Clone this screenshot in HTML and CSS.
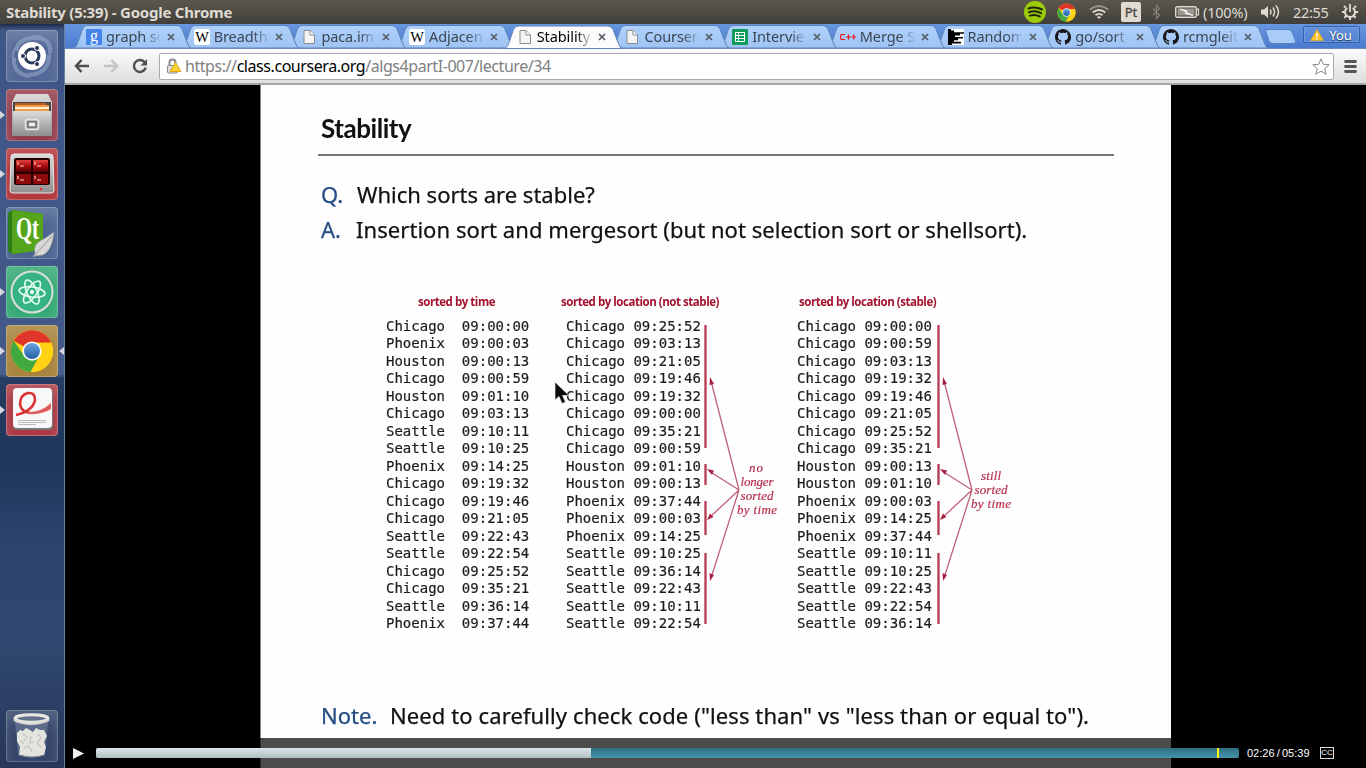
FILE: index.html
```html
<!DOCTYPE html>
<html lang="en">
<head>
<meta charset="utf-8">
<title>Stability (5:39)</title>
<link rel="stylesheet" href="styles.css">
</head>
<body>
<svg class="defs" width="0" height="0">
  <defs>
    <linearGradient id="tabfill" x1="0" y1="0" x2="0" y2="1"><stop offset="0" stop-color="#aed0fa"/><stop offset="1" stop-color="#9fc4f4"/></linearGradient>
    <linearGradient id="metal" x1="0" y1="0" x2="0" y2="1"><stop offset="0" stop-color="#dcdcdc"/><stop offset="1" stop-color="#8f8f8f"/></linearGradient>
    <linearGradient id="redscreen" x1="0" y1="0" x2="0" y2="1"><stop offset="0" stop-color="#e04040"/><stop offset=".5" stop-color="#a80b0b"/><stop offset="1" stop-color="#500"/></linearGradient>
    <linearGradient id="blueball" x1="0" y1="0" x2="0" y2="1"><stop offset="0" stop-color="#6ba2dd"/><stop offset="1" stop-color="#2161a8"/></linearGradient>
    <symbol id="tab" viewBox="0 0 124 24"><path d="M0 24 C4 24 5 21 6 18L10.500 5Q12 1.500 15 1.500H105Q108.500 1.500 110 5L115 18Q117 24 119 24Z"/></symbol>
    <symbol id="page" viewBox="0 0 16 16"><path d="M3 1.500H9L13.500 6V14.500H3Z" fill="#f4f4f4" stroke="#8c8c8c"/><path d="M9 1.500V6H13.500" fill="#fff" stroke="#8c8c8c"/></symbol>
    <symbol id="wiki" viewBox="0 0 16 16"><rect width="16" height="16" rx="2.500" fill="#fff"/><text x="8" y="13" text-anchor="middle" font-family="Liberation Serif, serif" font-size="14.500" fill="#000">W</text></symbol>
    <symbol id="github" viewBox="0 0 16 16"><path fill="#191717" d="M8 0C3.580 0 0 3.580 0 8c0 3.540 2.290 6.530 5.470 7.590.4.070.55-.17.55-.38 0-.19-.01-.82-.01-1.490-2.010.37-2.530-.49-2.690-.94-.09-.23-.48-.94-.82-1.130-.28-.15-.68-.52-.01-.53.63-.01 1.080.58 1.230.82.72 1.210 1.870.87 2.330.66.07-.52.28-.87.51-1.070-1.780-.2-3.640-.89-3.640-3.950 0-.87.31-1.590.82-2.150-.08-.2-.36-1.020.08-2.120 0 0 .67-.21 2.200.82A7.600 7.600 0 0 1 8 3.860c.68 0 1.360.09 2 .27 1.530-1.040 2.200-.82 2.200-.82.44 1.100.16 1.920.08 2.120.51.56.82 1.270.82 2.150 0 3.070-1.870 3.750-3.650 3.950.29.25.54.73.54 1.480 0 1.070-.01 1.930-.01 2.200 0 .21.15.46.55.38A8 8 0 0 0 8 0Z"/></symbol>
    <symbol id="close" viewBox="0 0 8 8"><path d="M1 1L7 7M7 1L1 7" stroke="#555c66" stroke-width="1.700"/></symbol>
    <symbol id="chrome" viewBox="0 0 48 48">
      <circle cx="24" cy="24" r="23" fill="#ffd214"/>
      <path d="M24 24L4 12.700A23 23 0 0 1 45 15H24Z" fill="#e0352b"/>
      <path d="M4 12.700A23 23 0 0 0 22.500 47L33 29L24 24L14 27Z" fill="#41a940"/>
      <path d="M24 15H45A23 23 0 0 1 22.500 47L32 29Z" fill="#ffd214"/>
      <circle cx="24" cy="24" r="10.500" fill="#fff"/><circle cx="24" cy="24" r="8.700" fill="url(#blueball)"/>
    </symbol>
  </defs>
</svg>

<header class="panel">
  <h1 class="panel-title">Stability (5:39) - Google Chrome</h1>
  <div class="tray">
    <svg class="t-spotify" width="22" height="22" viewBox="0 0 22 22"><circle cx="11" cy="11" r="11" fill="#9ccb0a"/><path d="M4.500 7.500Q11 5 18 8.500M5 11.200Q11 9 17 12.200M5.800 14.600Q11 13 15.800 15.500" fill="none" stroke="#20260c" stroke-width="2" stroke-linecap="round"/></svg>
    <svg class="t-chrome" width="19" height="19"><use href="#chrome"/></svg>
    <svg class="t-wifi" width="20" height="14" viewBox="0 0 20 14" fill="none" stroke-width="1.800"><path d="M.8 4.500Q10-2.500 19.200 4.500" stroke="#98958d"/><path d="M3.700 7.500Q10 2.500 16.300 7.500M6.500 10.200Q10 7.500 13.500 10.200" stroke="#dfdbd2"/><path d="M8 12L10 14L12 12Q10 10.500 8 12" fill="#dfdbd2" stroke="none"/></svg>
    <span class="t-lang">Pt</span>
    <svg class="t-bt" width="9" height="16" viewBox="0 0 9 16"><path d="M1 4.500L7.500 11L4.500 14.500V1.500L7.500 4.500L1 11" fill="none" stroke="#85827b" stroke-width="1.200"/></svg>
    <svg class="t-bat" width="25" height="12" viewBox="0 0 25 12"><rect x=".7" y=".7" width="20.600" height="10.600" rx="1.500" fill="none" stroke="#dfdbd2" stroke-width="1.400"/><rect x="2.500" y="2.500" width="17" height="7" fill="#9b9890"/><path d="M22 3H23.500V9H22" fill="none" stroke="#dfdbd2" stroke-width="1.200"/><path d="M5 3L12 5L11 6.500L18 9.500L10.500 7.500L11.500 6Z" fill="#fff" stroke="#fff" stroke-width=".8"/></svg>
    <span class="t-pct">(100%)</span>
    <svg class="t-vol" width="20" height="16" viewBox="0 0 20 16"><path d="M0 5.500H3L7 2V14L3 10.500H0Z" fill="#dfdbd2"/><path d="M9 5.500Q11 8 9 10.500M12 3.500Q15 8 12 12.500M15 1.500Q20 8 15 14.500" fill="none" stroke="#dfdbd2" stroke-width="1.500"/></svg>
    <span class="t-time">22:55</span>
    <svg class="t-gear" width="16" height="16" viewBox="0 0 16 16" fill="none" stroke="#dfdbd2"><path d="M5.300 3.800A5 5 0 1 0 10.700 3.800" stroke-width="2"/><path d="M8 0V8" stroke-width="1.800"/><path d="M3.500 3.500L2 2M12.500 3.500L14 2M3 8H0M13 8H16M4.300 11.700L2.300 13.700M11.700 11.700L13.700 13.700M8 13V16" stroke-width="2"/></svg>
  </div>
</header>

<div class="desktop">
  <nav class="launcher">
    <div class="tile dash"><svg width="52" height="52" viewBox="0 0 52 52"><g fill="none" stroke="#a9b9da" opacity=".45"><path d="M9 38Q1 17 22 8T44 29" stroke-width="2"/><path d="M10 21Q12 8 29 8T44 23M8 28Q7 45 24 46M43 25Q43 44 22 45" stroke-width="4"/></g><circle cx="26" cy="26" r="14" fill="#fff"/><circle cx="26" cy="26" r="7" fill="none" stroke="#2b3758" stroke-width="3"/><g fill="#2b3758" stroke="#fff"><circle cx="17" cy="26" r="2.500"/><circle cx="31" cy="18" r="2.500"/><circle cx="31" cy="34" r="2.500"/></g></svg></div>
    <div class="tile files run"><svg width="52" height="52" viewBox="0 0 52 52"><path d="M10 5H42L46 13V47H6V13Z" fill="url(#metal)"/><path d="M7 13H45V23H7Z" fill="#4b4843"/><path d="M9 14H40L42 22H9Z" fill="#b45d20"/><path d="M9 16H43V22H9Z" fill="#f09a45"/><path d="M9 18H43V20H9Z" fill="#fff1d6"/><path d="M7 22H45V46H7Z" fill="url(#metal)"/><rect x="19.500" y="30.500" width="13" height="10" rx="2" fill="#aaa" stroke="#e5e5e5" stroke-width="1.500"/><rect x="22" y="33" width="8" height="5" fill="#eee" stroke="#444"/></svg></div>
    <div class="tile term run"><svg width="52" height="52" viewBox="0 0 52 52"><path d="M8 6H44Q47 6 47 9L48 42Q48 45 45 45H7Q4 45 4 42L5 9Q5 6 8 6Z" fill="url(#metal)" stroke="#e8e8e8"/><rect x="8" y="10" width="36" height="27" rx="2" fill="#250000"/><path d="M10 12H25V24H10ZM27 12H42V24H27Z" fill="url(#redscreen)"/><path d="M10 26H25V36H10ZM27 26H42V36H27Z" fill="#8d0b0b"/><path d="M11 14L13 15.500L11 17M14 18H18M28 14L30 15.500L28 17M31 18H35M11 28L13 29.500L11 31M14 32H18M28 28L30 29.500L28 31M31 32H35" stroke="#ffd0d0" fill="none"/><circle cx="35" cy="41" r="1.200" fill="#e22"/></svg></div>
    <div class="tile qt"><svg width="52" height="52" viewBox="0 0 52 52"><path d="M2 6L6 3L37 7V43L6 47L2 44Z" fill="#2d7d1b"/><path d="M6 3L37 7V43L6 47Z" fill="#55a51c"/><text x="10" y="32" class="qt-text" textLength="23" lengthAdjust="spacingAndGlyphs">Qt</text><path d="M48 25Q46 44 37 48L30 49L27 50L29 46Q27 38 34 34Q40 31 48 25Z" fill="#d8d8d8" stroke="#8d9399" stroke-width=".7"/><path d="M46 29L28 49" stroke="#999"/></svg></div>
    <div class="tile atom run"><svg width="52" height="52" viewBox="0 0 52 52" fill="none" stroke="#e5fff2"><circle cx="26" cy="26" r="20.500" fill="#36b483" stroke="#ddd" stroke-width="2"/><g stroke-width="1.600"><ellipse cx="26" cy="26" rx="5" ry="13" transform="rotate(-25 26 26)"/><ellipse cx="26" cy="26" rx="5" ry="13" transform="rotate(35 26 26)"/><ellipse cx="26" cy="26" rx="5" ry="13" transform="rotate(-82 26 26)"/></g><circle cx="26" cy="26" r="1.700" fill="#fff"/></svg></div>
    <div class="tile chrome run active"><svg width="44" height="44"><use href="#chrome"/></svg></div>
    <div class="tile pdf run"><svg width="52" height="52" viewBox="0 0 52 52"><rect x="7" y="5" width="40" height="41" rx="4" fill="#777"/><rect x="7" y="4" width="39" height="40" rx="4" fill="#f8f8f8"/><path d="M10 31Q27 27 29 16Q29 8 22 9Q14 11 14 20Q15 28 24 29" fill="none" stroke="#db3031" stroke-width="2.500"/><path d="M22 28Q36 28 45 19V25Q36 31 22 30Z" fill="#e25b5b"/><path d="M12 36.500H40M12 38.500H40M12 40.500H30" stroke="#bbb"/></svg></div>
    <div class="tile trash"><svg width="52" height="52" viewBox="0 0 52 52"><path d="M9 12L12 45Q26 50 39 45L42 12Z" fill="#c6d0df" opacity=".25"/><path d="M11 23L14 20L17 21L20 18L24 20L27 22L30 18L34 20L38 20L41 26L38 32L40 37L38 45Q26 49 13 45L14 37L11 31Z" fill="#e4e4df"/><path d="M17 24L21 27L18 31M25 26L24 33L28 32M32 24L35 28L31 33L35 37M18 38L23 36L26 42M15 31L18 34" fill="none" stroke="#c3c3be" stroke-width="1.200"/><path d="M14 45Q26 49 38 45" stroke="#888" fill="none"/><ellipse cx="25.500" cy="8.500" rx="16.500" ry="3.800" fill="#65718b" stroke="#e8e8e2" stroke-width="3"/><path d="M8 10Q25 18 43 10" fill="none" stroke="#d9d9d3" stroke-width="2"/></svg></div>
  </nav>

  <main class="browser">
    <div class="tabstrip">
      <div class="tabs">
        <div class="tab"><svg class="shape"><use href="#tab"/></svg><svg class="fav" viewBox="0 0 16 16"><rect width="16" height="16" rx="1" fill="#4683ea"/><text x="8" y="12" text-anchor="middle" fill="#fff" font-family="Liberation Serif, serif" font-size="16">g</text></svg><span class="label">graph so</span><svg class="x"><use href="#close"/></svg></div>
        <div class="tab"><svg class="shape"><use href="#tab"/></svg><svg class="fav"><use href="#wiki"/></svg><span class="label">Breadth</span><svg class="x"><use href="#close"/></svg></div>
        <div class="tab"><svg class="shape"><use href="#tab"/></svg><svg class="fav"><use href="#page"/></svg><span class="label">paca.im</span><svg class="x"><use href="#close"/></svg></div>
        <div class="tab"><svg class="shape"><use href="#tab"/></svg><svg class="fav"><use href="#wiki"/></svg><span class="label">Adjacen</span><svg class="x"><use href="#close"/></svg></div>
        <div class="tab current"><svg class="shape"><use href="#tab"/></svg><svg class="fav"><use href="#page"/></svg><span class="label">Stability</span><svg class="x"><use href="#close"/></svg></div>
        <div class="tab"><svg class="shape"><use href="#tab"/></svg><svg class="fav"><use href="#page"/></svg><span class="label">Courser</span><svg class="x"><use href="#close"/></svg></div>
        <div class="tab"><svg class="shape"><use href="#tab"/></svg><svg class="fav" viewBox="0 0 16 16"><rect width="16" height="16" rx="1" fill="#109d59"/><path d="M3.500 3.500H12.500V12.500H3.500ZM3.500 6.500H12.500M3.500 9.500H12.500M6.500 3.500V12.500" stroke="#fff" fill="none"/></svg><span class="label">Intervie</span><svg class="x"><use href="#close"/></svg></div>
        <div class="tab"><svg class="shape"><use href="#tab"/></svg><svg class="fav" viewBox="0 0 16 16"><path d="M5 5.500H1.500L.5 6.500V9.500L1.500 10.500H5M6 8H11M8.500 5.500V10.500M11.500 8H16M13.700 5.500V10.500" fill="none" stroke="#f01018" stroke-width="1.200"/></svg><span class="label">Merge S</span><svg class="x"><use href="#close"/></svg></div>
        <div class="tab"><svg class="shape"><use href="#tab"/></svg><svg class="fav" viewBox="0 0 16 16"><rect width="16" height="16" fill="#fff"/><path d="M0 .8H3M0 2.400H6M0 4H16M0 5.600H12M0 7.200H7M0 8.800H15M0 10.400H10M0 12H6M0 13.600H13M0 15.200H4" stroke="#000" stroke-width="1.600"/></svg><span class="label">Random</span><svg class="x"><use href="#close"/></svg></div>
        <div class="tab"><svg class="shape"><use href="#tab"/></svg><svg class="fav"><use href="#github"/></svg><span class="label">go/sort</span><svg class="x"><use href="#close"/></svg></div>
        <div class="tab"><svg class="shape"><use href="#tab"/></svg><svg class="fav"><use href="#github"/></svg><span class="label">rcmgleit</span><svg class="x"><use href="#close"/></svg></div>
      </div>
      <svg class="newtab" width="32" height="16" viewBox="0 0 32 16"><path d="M3 .5H23Q26 .5 27 3L30.500 12Q31 14.500 28 14.500H8Q5 14.500 4 12L1 3Q.5.5 3 .5Z" fill="#a9cbf7" stroke="#5583c2"/></svg>
      <div class="profile"><svg width="14" height="12" viewBox="0 0 14 12"><path d="M7 .5L13.500 11.500H.5Z" fill="#fcc32c" stroke="#e7a917" stroke-width=".6"/><path d="M7 4V8M7 9V10.500" stroke="#fff" stroke-width="1.400"/></svg><span>You</span></div>
    </div>
    <div class="toolbar">
      <svg class="back" width="16" height="14" viewBox="0 0 16 14"><path d="M7.500 1L2 7L7.500 13M2.500 7H15" fill="none" stroke="#4f4f4f" stroke-width="2.500"/></svg>
      <svg class="fwd" width="16" height="14" viewBox="0 0 16 14"><path d="M8.500 1L14 7L8.500 13M13.500 7H1" fill="none" stroke="#c4c4c4" stroke-width="2.500"/></svg>
      <svg class="reload" width="16" height="16" viewBox="0 0 16 16"><path d="M12.500 4A6 6 0 1 0 13.700 9.700" fill="none" stroke="#4f4f4f" stroke-width="2.400"/><path d="M15 1V7.500H8.500Z" fill="#4f4f4f"/></svg>
      <div class="omnibox">
        <svg width="16" height="17" viewBox="0 0 16 17"><path d="M3.500 8V4.500Q3.500 1.500 6.500 1.500T9.500 4.500V8" fill="none" stroke="#8d8d8d" stroke-width="2"/><rect x="1.500" y="7.500" width="10" height="7.500" rx="1" fill="#ddd" stroke="#888"/><path d="M9.500 4.500L15 13.500H4Z" fill="#ffd02b" stroke="#e0a818" stroke-linejoin="round"/></svg>
        <span class="url">https://<b>class.coursera.org</b>/algs4partI-007/lecture/34</span>
        <svg class="star" width="18" height="17" viewBox="0 0 18 17"><path d="M9 .8L11.300 6.300L17.200 6.800L12.700 10.600L14.200 16.200L9 13.200L3.800 16.200L5.300 10.600L.8 6.800L6.700 6.300Z" fill="#fff" stroke="#8a8a8a" stroke-linejoin="round"/></svg>
      </div>
      <svg class="menu" width="13" height="13" viewBox="0 0 13 13"><path d="M1.500 1.500H11.500M1.500 6.500H11.500M1.500 11.500H11.500" stroke="#555" stroke-width="2.800" stroke-linecap="round"/></svg>
    </div>

    <section class="video">
      <article class="slide">
        <h2 class="title"><span>Stability</span></h2>
        <p class="line"><em class="q">Q.</em><span class="question">Which sorts are stable?</span></p>
        <p class="line"><em class="a">A.</em><span class="answer">Insertion sort and mergesort (but not selection sort or shellsort).</span></p>
        <div class="tables">
          <div class="sorted c1"><h3>sorted by time</h3><pre>Chicago  09:00:00
Phoenix  09:00:03
Houston  09:00:13
Chicago  09:00:59
Houston  09:01:10
Chicago  09:03:13
Seattle  09:10:11
Seattle  09:10:25
Phoenix  09:14:25
Chicago  09:19:32
Chicago  09:19:46
Chicago  09:21:05
Seattle  09:22:43
Seattle  09:22:54
Chicago  09:25:52
Chicago  09:35:21
Seattle  09:36:14
Phoenix  09:37:44</pre></div>
          <div class="sorted c2"><h3>sorted by location (not stable)</h3><pre>Chicago 09:25:52
Chicago 09:03:13
Chicago 09:21:05
Chicago 09:19:46
Chicago 09:19:32
Chicago 09:00:00
Chicago 09:35:21
Chicago 09:00:59
Houston 09:01:10
Houston 09:00:13
Phoenix 09:37:44
Phoenix 09:00:03
Phoenix 09:14:25
Seattle 09:10:25
Seattle 09:36:14
Seattle 09:22:43
Seattle 09:10:11
Seattle 09:22:54</pre></div>
          <svg class="notes n1" width="90" height="340" viewBox="0 0 90 340">
            <g id="marks">
              <path d="M4.500 32V155M4.500 171V192M4.500 208V242M4.500 260V331" stroke="#b53a50" stroke-width="2.300"/>
              <path d="M38 197L10 88M38 197L8 178M38 197L8 225M38 197L10 285" fill="none" stroke="#c0607a" stroke-width="1.300"/>
              <path d="M9 84L13 91L8.500 92ZM6 176L13 177.500L11 182ZM6 227L9 220.500L12.500 224ZM9 288L8.500 280L13 282Z" fill="#a82442"/>
            </g>
            <text x="55" y="179" textLength="14">no</text><text x="56" y="193" textLength="33">longer</text><text x="56" y="207" textLength="33">sorted</text><text x="56" y="221" textLength="40">by time</text>
          </svg>
          <div class="sorted c3"><h3>sorted by location (stable)</h3><pre>Chicago 09:00:00
Chicago 09:00:59
Chicago 09:03:13
Chicago 09:19:32
Chicago 09:19:46
Chicago 09:21:05
Chicago 09:25:52
Chicago 09:35:21
Houston 09:00:13
Houston 09:01:10
Phoenix 09:00:03
Phoenix 09:14:25
Phoenix 09:37:44
Seattle 09:10:11
Seattle 09:10:25
Seattle 09:22:43
Seattle 09:22:54
Seattle 09:36:14</pre></div>
          <svg class="notes n2" width="90" height="340" viewBox="0 0 90 340"><use href="#marks"/><text x="57" y="187" textLength="20">still</text><text x="57" y="201" textLength="33">sorted</text><text x="57" y="215" textLength="40">by time</text></svg>
        </div>
        <p class="line note"><em class="n">Note.</em><span class="notetext">Need to carefully check code ("less than" vs "less than or equal to").</span></p>
      </article>
      <svg class="pointer" width="17" height="24" viewBox="0 0 17 24"><path d="M1 1V19L5 15.500L8 22.500L11.500 21L8.500 14.500H15Z" fill="#0a0a0a" stroke="#eee" stroke-width=".7"/></svg>
      <div class="controls">
        <svg width="11" height="11" viewBox="0 0 11 11"><path d="M0 0L11 5.500L0 11Z" fill="#eee"/></svg>
        <div class="track"><div class="played"></div><div class="mark"></div></div>
        <span class="time">02:26&thinsp;/&thinsp;05:39</span>
        <span class="cc">CC</span>
      </div>
    </section>
  </main>
</div>
</body>
</html>
```
FILE: styles.css
```css
* { box-sizing: border-box; }
body { margin: 0; width: 1366px; height: 768px; overflow: hidden; background: #000; font-family: "Noto Sans", sans-serif; }
.defs { position: absolute; }
h1, h2, h3, p, pre { margin: 0; font-weight: normal; }
svg { display: block; flex: none; }

.panel { height: 24px; display: flex; align-items: center; justify-content: space-between; background: linear-gradient(#5b574d, #403f3a); color: #dfdbd2; padding-left: 6px; }
.panel-title { font-size: 15px; font-weight: bold; letter-spacing: -.23px; line-height: 24px; white-space: nowrap; }
.tray { display: flex; align-items: center; width: 342px; height: 24px; font-size: 14.500px; line-height: 24px; }
.t-chrome { margin-left: 11px; }
.t-wifi { margin-left: 13px; }
.t-lang { margin-left: 12px; width: 20px; height: 20px; border-radius: 2px; background: #dfdbd2; color: #4a4842; font-size: 13px; line-height: 20px; text-align: center; -webkit-text-stroke: .3px #4a4842; }
.t-bt { margin-left: 11px; }
.t-bat { margin-left: 14px; }
.t-pct { margin-left: 3px; width: 46px; letter-spacing: -.2px; }
.t-vol { margin-left: 12px; }
.t-time { margin-left: 12px; width: 37px; letter-spacing: -.3px; }
.t-gear { margin-left: 12px; }

.desktop { display: flex; height: 744px; }
.launcher { width: 65px; flex: none; padding: 6px 0 6px 6px; display: flex; flex-direction: column; gap: 7px; border-right: 1px solid #6d80a1; background: linear-gradient(#1e2a48 0, #3e5685 6px, #43598a 320px, #4b6190 350px, #253c63 354px, #21365c 440px, #2d456f 530px, #30476f 620px, #27375a 744px); }
.tile { position: relative; width: 52px; height: 52px; flex: none; border-radius: 4px; display: grid; place-items: center; box-shadow: inset 0 0 0 1px rgba(255,255,255,.22), inset 0 10px 14px rgba(255,255,255,.16); }
.dash { background: #536896; }
.files { background: #93404e; }
.term { background: #b3373b; }
.qt { background: #4d6591; }
.atom { background: #37a975; }
.chrome { background: #a8843f; }
.pdf { background: #ac3a44; }
.trash { margin-top: auto; background: #35456b; }
.qt-text { font: bold 31px "Liberation Serif", serif; fill: #fff; }
.run::before { content: ""; position: absolute; left: -6px; top: 22px; border: 4px solid transparent; border-left: 5px solid #d5d8de; border-right: 0; }
.active::after { content: ""; position: absolute; right: -6px; top: 22px; border: 4px solid transparent; border-right: 5px solid #d5d8de; border-left: 0; }

.browser { flex: 1; min-width: 0; display: flex; flex-direction: column; }
.tabstrip { height: 25px; display: flex; background: linear-gradient(#6796df, #4a7bcf); border-bottom: 1px solid #6b8dbd; }
.tabs { display: flex; padding-left: 7px; isolation: isolate; }
.tab { position: relative; width: 107.700px; height: 24px; flex: none; display: flex; align-items: center; padding-left: 14px; font-size: 14.500px; color: #3c4654; }
.tab:nth-child(1) { z-index: 11; }
.tab:nth-child(2) { z-index: 10; }
.tab:nth-child(3) { z-index: 9; }
.tab:nth-child(4) { z-index: 8; }
.tab:nth-child(6) { z-index: 6; }
.tab:nth-child(7) { z-index: 5; }
.tab:nth-child(8) { z-index: 4; }
.tab:nth-child(9) { z-index: 3; }
.tab:nth-child(10) { z-index: 2; }
.tab:nth-child(11) { z-index: 1; }
.shape { position: absolute; left: 0; top: 0; width: 124px; height: 24px; fill: url(#tabfill); stroke: #5d83b8; stroke-width: 1; overflow: visible; }
.tab.current { z-index: 12; color: #000; }
.current .shape { height: 25px; fill: #fbfbfb; }
.fav { position: relative; width: 16px; height: 16px; margin-top: 2px; }
.label { position: relative; margin-left: 4px; width: 54px; overflow: hidden; white-space: nowrap; line-height: 24px; letter-spacing: -.1px; -webkit-mask-image: linear-gradient(90deg, #000 72%, rgba(0,0,0,.1)); mask-image: linear-gradient(90deg, #000 72%, rgba(0,0,0,.1)); }
.x { position: relative; width: 8px; height: 8px; margin: 2px 0 0 7px; }
.newtab { margin: 5px 0 0 8px; }
.profile { margin: 2px 0 0 6px; width: 57px; height: 17px; border: 1px solid #345fa8; border-radius: 2px; box-shadow: inset 0 0 0 1px #719bdc; display: flex; align-items: center; justify-content: center; gap: 5px; color: #fff; font-size: 13px; text-shadow: 0 1px 1px #234; }
.toolbar { height: 36px; flex: none; display: flex; align-items: center; padding: 0 9px 0 9px; background: linear-gradient(#fbfbfb, #dedede); border-bottom: 2px solid #a5a5a5; }
.fwd { margin-left: 13px; }
.reload { margin-left: 13px; }
.omnibox { margin: 0 10px 0 11px; height: 27px; flex: 1; display: flex; align-items: center; padding: 0 3px 0 6px; background: #fff; border: 1px solid #aaa; border-radius: 2px; }
.url { margin-left: 3px; flex: 1; font-size: 16px; color: #808080; letter-spacing: -.44px; line-height: 24px; white-space: nowrap; }
.url b { font-weight: normal; color: #000; }

.video { position: relative; height: 683px; display: flex; justify-content: flex-start; padding-left: 195px; background: #000; }
.slide { width: 911px; height: 683px; background: #fefefe; padding: 27px 0 0 56px; border-left: 1px solid #888; color: #111; }
.title { width: 796px; height: 44px; margin-left: 1px; border-bottom: 2px solid #777; font: bold 26px/32px Lato, sans-serif; letter-spacing: -.45px; padding-left: 3px; filter: blur(.3px); }
.line { display: flex; align-items: center; height: 35px; padding-left: 4px; font-size: 22px; line-height: 35px; white-space: pre; -webkit-text-stroke: .25px; filter: blur(.3px); }
.title + .line { margin-top: 21px; }
.line em { font-style: normal; color: #244c85; flex: none; }
.q { width: 36px; }
.a { width: 35px; }
.n { width: 69px; }
.answer { letter-spacing: .06px; }
.notetext { letter-spacing: .1px; }
.tables { display: flex; height: 340px; margin: 46px 0 0 69px; filter: blur(.3px); }
.sorted { flex: none; }
.sorted h3 { height: 18px; font: bold 11.500px/18px "Open Sans", sans-serif; color: #a3122f; white-space: nowrap; letter-spacing: -.46px; }
.sorted pre { margin-top: 7px; font: 14px/17.470px "DejaVu Sans Mono", monospace; color: #1c1c1c; -webkit-text-stroke: .2px; }
.c1 { width: 180px; }
.c1 h3 { padding-left: 32px; }
.c2 { width: 135px; }
.c2 h3 { margin-left: -5px; }
.n1 { margin-right: 6px; overflow: visible; }
.c3 { width: 137px; }
.c3 h3 { padding-left: 2px; }
.notes { overflow: visible; }
.notes text { font: italic 13px "Liberation Serif", serif; fill: #b5304d; text-anchor: middle; stroke: #b5304d; stroke-width: .2; }
.note { margin-top: 65px; }
.pointer { position: absolute; left: 489px; top: 296px; }
.controls { position: absolute; left: 0; right: 0; bottom: 0; height: 30px; display: flex; align-items: center; padding-left: 8px; background: rgba(0,0,0,.7); color: #fff; }
.track { position: relative; margin-left: 12px; width: 1143px; height: 10px; border-radius: 2px; background: linear-gradient(#2d7083, #4593a9); }
.played { width: 495px; height: 10px; border-radius: 2px 0 0 2px; background: linear-gradient(#dce5e7, #aebfc3); }
.mark { position: absolute; left: 1121px; top: 0; width: 2px; height: 10px; background: #ff0; }
.time { margin-left: 8px; width: 64px; font: 11px/14px "Liberation Sans", sans-serif; white-space: nowrap; }
.cc { margin-left: 9px; width: 14px; height: 12px; border: 1px solid #ddd; font: 8px/10px "Liberation Sans", sans-serif; text-align: center; }
```
